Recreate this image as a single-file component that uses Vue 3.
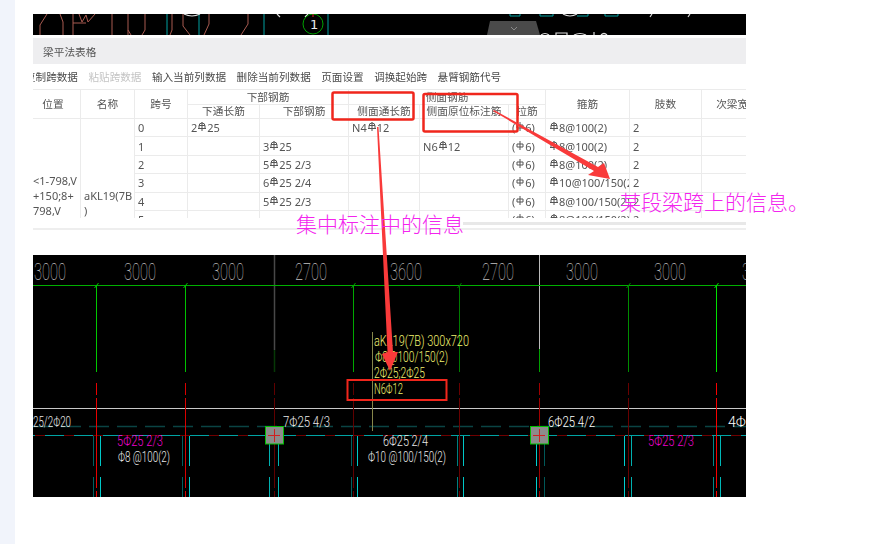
<script setup>
const toolbar = [
  { t: '复制跨数据' }, { t: '粘贴跨数据', off: true }, { t: '输入当前列数据' },
  { t: '删除当前列数据' }, { t: '页面设置' }, { t: '调换起始跨' }, { t: '悬臂钢筋代号' }
]
const colWidths = [55, 54, 53, 72, 89, 71, 89, 37, 84, 72, 72]
const rows = [
  ['0', '2^25', '', 'N4^12', '', '(~6)', '^8@100(2)', '2', ''],
  ['1', '', '3^25', '', 'N6^12', '(~6)', '^8@100(2)', '2', ''],
  ['2', '', '5^25 2/3', '', '', '(~6)', '^8@100(2)', '2', ''],
  ['3', '', '6^25 2/4', '', '', '(~6)', '^10@100/150(2)', '2', ''],
  ['4', '', '5^25 2/3', '', '', '(~6)', '^8@100/150(2)', '2', ''],
  ['5', '', '', '', '', '(~6)', '^8@100/150(2)', '2', ''],
  ['6', '', '', '', '', '(~6)', '^8@100(2)', '2', '']
]
const parse = (s) => s.split(/([\^~])/).filter(Boolean)

const gridLines = [
  { x: 96, c: '#00c800' }, { x: 185, c: '#00c000' }, { x: 353, c: '#00a800' },
  { x: 459, c: '#007c00' }, { x: 628, c: '#008c00' }, { x: 716, c: '#00e000' }
]
const dims = [
  { x: 34, t: '3000' }, { x: 124, t: '3000' }, { x: 212, t: '3000' }, { x: 295, t: '2700' },
  { x: 390, t: '3600' }, { x: 482, t: '2700' }, { x: 566, t: '3000' }, { x: 654, t: '3000' }, { x: 742, t: '3000' }
]
const reds = [
  { x: 96, c: '#e80000' }, { x: 185, c: '#d80000' }, { x: 274, c: '#600000' },
  { x: 353, c: '#600000' }, { x: 459, c: '#680000' }, { x: 539, c: '#a00000' },
  { x: 628, c: '#680000' }, { x: 716, c: '#f80000' }
]
const stirrups = [
  { x: 93, c: '#006060' }, { x: 100, c: '#00c8c8' }, { x: 182, c: '#006060' }, { x: 189, c: '#00c8c8' },
  { x: 269, c: '#00b0b0' }, { x: 278, c: '#00b0b0' }, { x: 351, c: '#006060' }, { x: 357, c: '#00c8c8' },
  { x: 457, c: '#008080' }, { x: 463, c: '#00c8c8' }, { x: 536, c: '#00d0d0' }, { x: 544, c: '#005858' },
  { x: 624, c: '#00d0d0' }, { x: 631, c: '#00b0b0' }, { x: 713, c: '#008888' }, { x: 720, c: '#00b8b8' }
]
const labels = [
  { x: 33, y: 427, w: 38, t: '25/2Φ20', c: '#e8e8e8' },
  { x: 283, y: 427, w: 47, t: '7Φ25 4/3', c: '#e8e8e8' },
  { x: 548, y: 427, w: 47, t: '6Φ25 4/2', c: '#ffffff' },
  { x: 728, y: 427, w: 18, t: '4Φ', c: '#ffffff' },
  { x: 117, y: 446, w: 46, t: '5Φ25 2/3', c: '#f000d0' },
  { x: 648, y: 446, w: 46, t: '5Φ25 2/3', c: '#f000d0' },
  { x: 383, y: 446, w: 45, t: '6Φ25 2/4', c: '#e8e8e8' },
  { x: 118, y: 462, w: 52, t: 'Φ8 @100(2)', c: '#e8e8e8' },
  { x: 368, y: 462, w: 78, t: 'Φ10 @100/150(2)', c: '#e8e8e8' },
  { x: 374, y: 346, w: 95, t: 'aKL19(7B) 300x720', c: '#f0f070' },
  { x: 375, y: 362, w: 73, t: 'Φ8@100/150(2)', c: '#f0f070' },
  { x: 374, y: 378, w: 51, t: '2Φ25;2Φ25', c: '#f0f070' },
  { x: 374, y: 394, w: 29, t: 'N6Φ12', c: '#f0f070' }
]
const columns = [
  { x: 265, cx: 274 }, { x: 530, cx: 539 }
]
</script>

<template>
  <div class="page">
    <aside class="rail"></aside>
    <main class="sheet">
      <svg class="strip" viewBox="33 14 713 21" width="713" height="21">
        <rect x="33" y="14" width="713" height="21" fill="#000" />
        <g fill="none" stroke="#a85a50" stroke-width="1">
          <path d="M47 14 L40 25 V35 M60 14 L63 22 V35" />
          <path d="M73 35 V14 M73 23 H86 M79 14 L82 22 L86 15 L88 22 L95 14" />
          <path d="M112 14 V35 M128 35 V14 M145 14 V30 L142 35 M128 30 L131 35" />
          <path d="M172 14 V30 L170 35 M183 14 V26 L190 35 M204 35 L209 24 V14 M248 14 V24 L241 35" />
        </g>
        <g stroke="#00a0a0" stroke-width="1" fill="none">
          <path d="M167 14 V35 M199 14 V35 M264 14 V35 M328 14 V35" />
          <path d="M510 14 V16 H520 V14 M540 14 V16 H553 V14 M577 16 H588 V14 M605 14 V16 H618 V14" />
        </g>
        <g stroke="#ddd" stroke-width="1.2" fill="none">
          <path d="M184 14 Q192 18 200 14 M277 14 L280 17 M305 17 L308 14 M652 14 L650 17 M690 14 L688 17 M563 14 Q570 18 577 14" />
          <path d="M541 35 Q545 32 549 35 M556 35 V33 H567 V35 M574 35 Q580 32 586 35 M594 35 V32 M601 35 Q604 32 607 35" />
        </g>
        <circle cx="313" cy="24" r="10" fill="none" stroke="#00a000" />
        <path d="M313 14 V17" stroke="#e02020" />
        <text x="310" y="29" class="seal">1</text>
        <path d="M487 35 L490 21 H536 L540 35 Z" fill="#4a4a4a" />
        <path d="M511 27 L514 30 L517 27" fill="none" stroke="#8a8a8a" />
      </svg>

      <section class="panel">
        <header class="panel-title">梁平法表格</header>
        <nav class="toolbar">
          <span v-for="item in toolbar" :key="item.t" :class="{ off: item.off }">{{ item.t }}</span>
        </nav>
        <div class="table-clip">
          <table class="grid">
            <colgroup>
              <col v-for="(w, i) in colWidths" :key="i" :style="{ width: w + 'px' }" />
            </colgroup>
            <thead>
              <tr class="h1">
                <th rowspan="2">位置</th>
                <th rowspan="2">名称</th>
                <th rowspan="2">跨号</th>
                <th colspan="2">下部钢筋</th>
                <th colspan="3">侧面钢筋</th>
                <th rowspan="2">箍筋</th>
                <th rowspan="2">肢数</th>
                <th rowspan="2">次梁宽度</th>
              </tr>
              <tr class="h2">
                <th>下通长筋</th>
                <th>下部钢筋</th>
                <th>侧面通长筋</th>
                <th>侧面原位标注筋</th>
                <th>拉筋</th>
              </tr>
            </thead>
            <tbody>
              <tr v-for="(row, r) in rows" :key="r">
                <td v-if="r === 0" rowspan="7" class="loc">
                  <div>&lt;1-798,V</div>
                  <div>+150;8+</div>
                  <div>798,V</div>
                </td>
                <td v-if="r === 0" rowspan="7" class="name">
                  <div>aKL19(7B</div>
                  <div>)</div>
                </td>
                <td v-for="(cell, c) in row" :key="c">
                  <template v-for="(seg, s) in parse(cell)" :key="s">
                    <svg v-if="seg === '^'" class="sym" viewBox="0 0 8 9" width="8" height="9">
                      <path d="M1 6 V4 Q1 1 4 1 Q7 1 7 4 V6 M0 6.500 H8 M4 0 V9 M1 3.500 H7" fill="none" stroke="#555" stroke-width="1" />
                    </svg>
                    <svg v-else-if="seg === '~'" class="sym" viewBox="0 0 8 9" width="8" height="9">
                      <path d="M1 3 H7 V6 H1 Z M4 0 V9" fill="none" stroke="#555" stroke-width="1" />
                    </svg>
                    <template v-else>{{ seg }}</template>
                  </template>
                </td>
              </tr>
            </tbody>
          </table>
        </div>
        <div class="scroll-area">
          <div class="scrollbar"></div>
          <div class="rule"></div>
        </div>
      </section>

      <svg class="cad" viewBox="33 255 713 242" width="713" height="242">
        <rect x="33" y="255" width="713" height="242" fill="#000" />
        <line x1="274.500" y1="255" x2="274.500" y2="350" stroke="#484848" stroke-width="1.500" />
        <line x1="274.500" y1="350" x2="274.500" y2="372" stroke="#063806" stroke-width="1.500" />
        <line x1="539.500" y1="255" x2="539.500" y2="349" stroke="#bbb" />
        <line x1="539.500" y1="349" x2="539.500" y2="372" stroke="#00a000" />
        <line x1="33" y1="285.500" x2="746" y2="285.500" stroke="#00b000" />
        <g v-for="g in gridLines" :key="g.x">
          <line :x1="g.x + 0.5" y1="285" :x2="g.x + 0.5" y2="372" :stroke="g.c" />
          <line :x1="g.x - 1.5" y1="288" :x2="g.x + 2.5" y2="283" :stroke="g.c" />
        </g>
        <text v-for="d in dims" :key="d.x" class="dim" :x="d.x" y="280" textLength="32" lengthAdjust="spacingAndGlyphs">{{ d.t }}</text>

        <line x1="33" y1="408.500" x2="746" y2="408.500" stroke="#c8c8c8" />
        <line x1="33" y1="426.500" x2="746" y2="426.500" stroke="#0a4444" stroke-dasharray="20 8" stroke-width="1.500" />
        <line x1="33" y1="435.500" x2="746" y2="435.500" stroke="#00a4a4" />
        <line x1="35" y1="435.500" x2="746" y2="435.500" stroke="#700000" stroke-dasharray="10 19" />
        <line x1="372.500" y1="332" x2="372.500" y2="431" stroke="#86864a" />

        <line v-for="s in stirrups" :key="s.x" :x1="s.x + 0.5" y1="436" :x2="s.x + 0.5" y2="497" :stroke="s.c" stroke-dasharray="30 11" />
        <line v-for="l in reds" :key="l.x" :x1="l.x + 0.5" y1="383" :x2="l.x + 0.5" y2="497" :stroke="l.c" stroke-dasharray="12 3 90 3" />

        <g v-for="col in columns" :key="col.x">
          <rect :x="col.x + 0.5" y="426.500" width="18" height="17.500" fill="#8c8c8c" stroke="#00c000" />
          <path :d="`M${col.cx - 6} 435.500 H${col.cx + 6} M${col.cx + 0.5} 429 V442`" stroke="#d02020" fill="none" />
        </g>

        <text v-for="l in labels" :key="l.t + l.x" class="label" :x="l.x" :y="l.y" :textLength="l.w" lengthAdjust="spacingAndGlyphs" :fill="l.c">{{ l.t }}</text>
      </svg>
    </main>

    <svg class="marks" viewBox="0 0 872 544" width="872" height="544">
      <g fill="none" stroke="#f0261c" stroke-width="2.500">
        <rect x="332.500" y="92.500" width="81" height="27" rx="1.500" />
        <rect x="423.500" y="94" width="94" height="37.500" rx="1.500" />
      </g>
      <rect x="347.500" y="380" width="99" height="20" fill="none" stroke="#f0261c" stroke-width="2" />
      <polygon points="377,127 378.500,127 393,352 398,352 390,371 382,354 387.500,352" fill="#f93a3a" />
      <polygon points="493,111 494,110 598,167 604,163 610,179 588,175 594,171" fill="#f93a3a" />
    </svg>
    <div class="note note-a">集中标注中的信息</div>
    <div class="note note-b">某段梁跨上的信息。</div>
  </div>
</template>

<style>
html, body { margin: 0; background: #fff; }
</style>

<style scoped>
.page {
  position: relative;
  display: flex;
  width: 872px;
  height: 544px;
  overflow: hidden;
  background: #fff;
  font-family: "Noto Sans", "Noto Sans CJK SC", sans-serif;
}
.rail {
  flex: 0 0 15px;
  background: #f1f4fb;
}
.sheet {
  display: flex;
  flex-direction: column;
  width: 713px;
  margin-left: 18px;
  padding-top: 14px;
}
.strip, .cad { display: block; flex: none; }
.seal {
  font-family: "DejaVu Sans", sans-serif;
  font-size: 13px;
  fill: #e8e8e8;
}
.panel {
  display: flex;
  flex-direction: column;
  margin-top: 3px;
  overflow: hidden;
  filter: blur(0.35px);
}
.panel-title {
  height: 26px;
  line-height: 28px;
  padding-left: 10px;
  background: #eeeef0;
  color: #555;
  font-size: 10.700px;
}
.toolbar {
  display: flex;
  gap: 10.500px;
  height: 25px;
  align-items: center;
  margin-left: -8px;
  color: #4a4a4a;
  font-size: 10.600px;
  white-space: nowrap;
}
.toolbar .off { color: #c4c4c4; }
.table-clip {
  height: 129px;
  overflow: hidden;
}
.grid {
  width: 748px;
  margin-left: -8px;
  table-layout: fixed;
  border-collapse: collapse;
  color: #555;
  font-size: 11px;
}
.grid th, .grid td {
  border: 1.500px solid #ebebeb;
  padding: 0 3px;
  overflow: hidden;
  white-space: nowrap;
}
.grid th {
  font-weight: 400;
  font-size: 10.700px;
  line-height: 13px;
}
.h1 { height: 15px; }
.h2 { height: 14px; }
.grid tbody tr { height: 18.400px; }
.grid td { line-height: 17px; }
.grid .loc, .grid .name {
  vertical-align: top;
  white-space: normal;
  line-height: 15px;
}
.grid .loc { padding: 54px 0 0 7px; }
.grid .name { padding: 69px 0 0 3px; }
.sym {
  display: inline-block;
  margin: 0 1px;
  vertical-align: 1px;
}
.scroll-area {
  display: flex;
  flex-direction: column;
  height: 37px;
}
.scrollbar {
  height: 3px;
  margin: 4px 0 0 430px;
  background: #e8e8e8;
}
.rule {
  height: 2px;
  margin-top: 3px;
  background: #eeeeee;
}
.dim {
  font-family: Roboto, sans-serif;
  font-weight: 100;
  font-size: 23px;
  fill: #c4c4c4;
}
.label {
  font-family: Roboto, sans-serif;
  font-weight: 300;
  font-size: 15px;
}
.marks {
  position: absolute;
  top: 0;
  left: 0;
  pointer-events: none;
}
.note {
  position: absolute;
  color: #f324ee;
  font-family: "Noto Sans CJK SC", sans-serif;
  font-weight: 300;
  font-size: 21px;
  line-height: 24px;
  white-space: nowrap;
}
.note-a { left: 296px; top: 211px; }
.note-b { left: 620px; top: 189px; }
</style>
